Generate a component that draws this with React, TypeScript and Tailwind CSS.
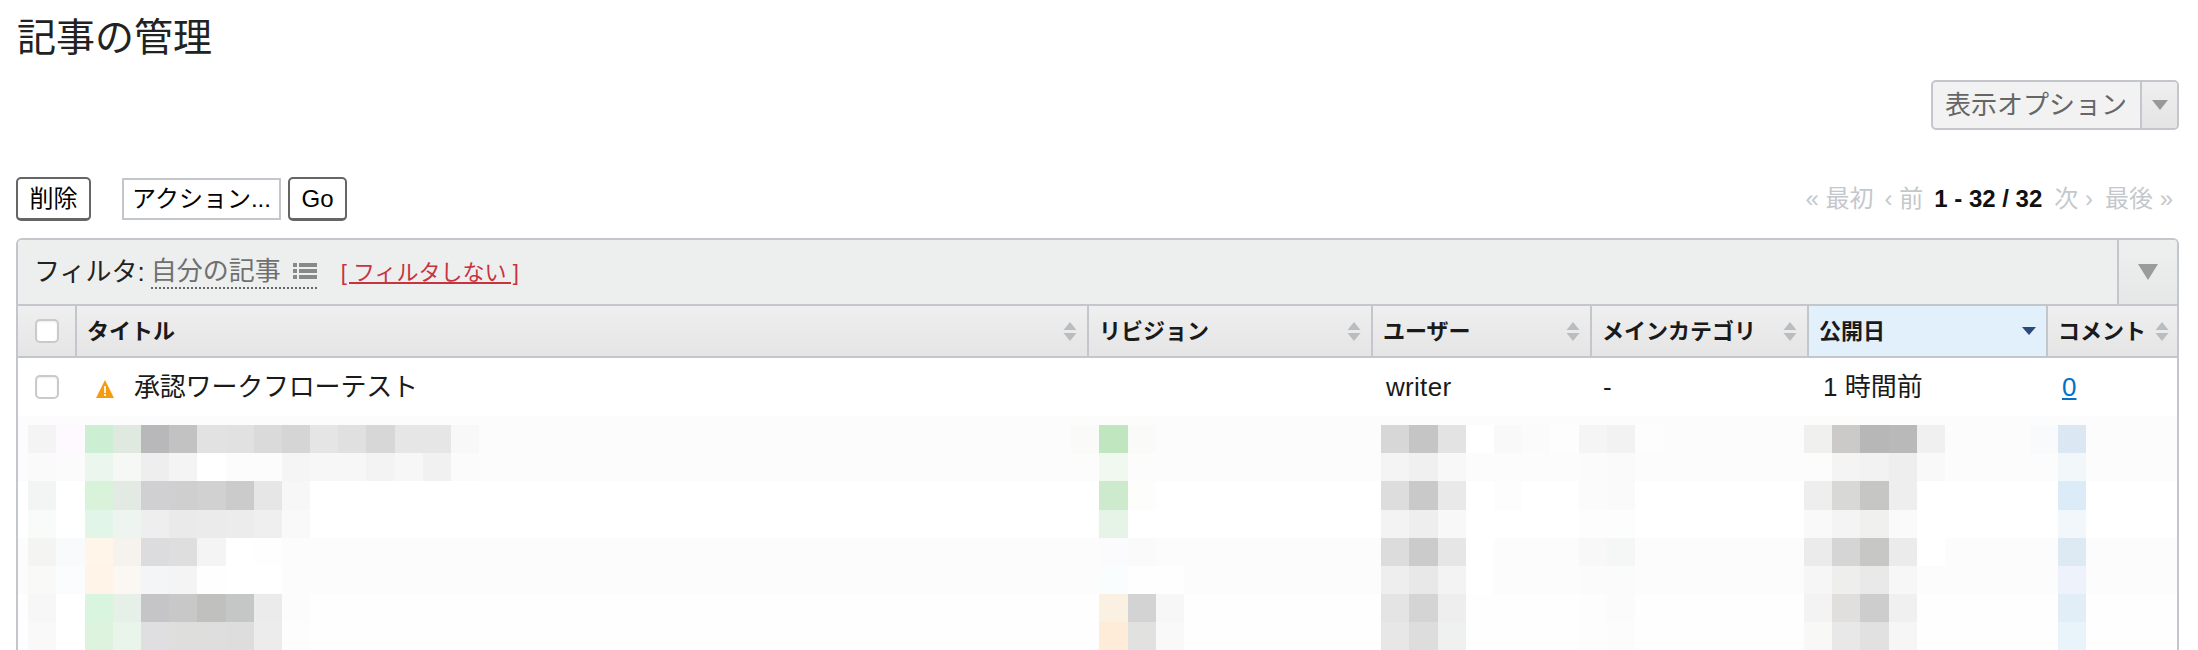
import React from "react";

const FONT = "font-['Liberation_Sans','Noto_Sans_CJK_JP',sans-serif]";
const COLS = "grid grid-cols-[57px_1012px_284px_219px_217px_239px_131px]";

type Cell = [number, string];
type Row = { bg: string; cells: Cell[] };

const seq = (start: number, colours: string[]): Cell[] =>
  colours.map((c, i) => [start + i, c] as Cell);

const mosaic: Row[] = [
  {
    bg: "#fcfcfc",
    cells: [
      ...seq(1, ["#f4f4f4", "#fef9fe", "#cceed2", "#dfe9e0", "#b8b8ba", "#c2c2c2", "#e2e2e2", "#e1e1e1", "#dadada", "#d5d5d5", "#e5e5e5", "#e0e0e0", "#d7d7d7", "#e6e6e6", "#e6e6e6", "#f8f8f8"]),
      ...seq(38, ["#fafaf8", "#bfe6bf", "#fafaf8"]),
      ...seq(49, ["#d7d7d7", "#c5c5c5", "#e3e3e3", "#ffffff"]),
      ...seq(53, ["#f9f9f9", "#fbfbfb", "#fdfdfd", "#f5f5f5", "#f2f2f2", "#fdfdfd"]),
      ...seq(64, ["#f0f0ee", "#cbcac8", "#b7b7b7", "#b9b9b9", "#f0f0f0"]),
      ...seq(72, ["#f8fafc", "#dbe8f3"]),
    ],
  },
  {
    bg: "#fcfcfc",
    cells: [
      ...seq(1, ["#fafafa", "#fbfbfb", "#ebf6ee", "#f5f8f5", "#eeeeee", "#f4f4f4", "#ffffff", "#fcfcfc", "#fcfcfc", "#f5f5f5", "#f7f7f7", "#f7f7f7", "#f3f3f3", "#f7f7f7", "#f1f1f1", "#fbfbfb"]),
      [39, "#f0f8f0"],
      ...seq(49, ["#f4f4f4", "#f0f0f0", "#f8f8f8"]),
      ...seq(56, ["#fbfbfb", "#fafafa"]),
      ...seq(65, ["#f4f4f4", "#f2f2f2", "#eeeeee", "#f9f9f9"]),
      [73, "#f2f7fa"],
    ],
  },
  {
    bg: "#ffffff",
    cells: [
      ...seq(1, ["#f3f5f4", "#ffffff", "#d8f3d9", "#e3eae3", "#d0d0d2", "#cfcfcf", "#d1d1d1", "#cbcbcb", "#e6e6e6", "#f7f7f7"]),
      ...seq(39, ["#cdeacd", "#fdfdfb"]),
      ...seq(49, ["#dddddd", "#c9c9c9", "#e9e9e9"]),
      [53, "#fdfdfd"],
      ...seq(56, ["#fbfbfb", "#fafafa"]),
      ...seq(64, ["#eeeeee", "#d8d8d6", "#c6c6c4", "#eeeeee"]),
      [73, "#dcebf8"],
    ],
  },
  {
    bg: "#ffffff",
    cells: [
      ...seq(1, ["#f9fbfa", "#ffffff", "#e1f5e8", "#eef5f0", "#eeeeee", "#eaeaea", "#ebebeb", "#ececec", "#efefef", "#f9f9f9"]),
      [39, "#e6f4e8"],
      ...seq(49, ["#f3f3f3", "#eeeeee", "#f8f8f8"]),
      ...seq(56, ["#fdfdfd", "#fdfdfd"]),
      ...seq(64, ["#f9f9f9", "#f4f4f4", "#f0f0ee", "#fafafa"]),
      [73, "#f2f7fc"],
    ],
  },
  {
    bg: "#fcfcfc",
    cells: [
      ...seq(1, ["#f4f4f2", "#f9fafc", "#fff5e8", "#f6f3ee", "#dcdcde", "#dedede", "#f4f4f4", "#ffffff", "#fefefe"]),
      ...seq(39, ["#fbfbfe", "#fafafa"]),
      ...seq(49, ["#dcdcdc", "#cbcbcb", "#e6e6e6", "#ffffff"]),
      ...seq(56, ["#f8f8f8", "#f5f7f6"]),
      ...seq(64, ["#ebebeb", "#d5d5d5", "#c7c7c5", "#ebebeb", "#ffffff"]),
      [73, "#dde9f3"],
    ],
  },
  {
    bg: "#fcfcfc",
    cells: [
      ...seq(1, ["#f9f9f7", "#fbfcfe", "#fff4e7", "#fbf8f3", "#f4f5f7", "#f4f4f4", "#fefefe", "#ffffff", "#ffffff"]),
      ...seq(39, ["#fafdfe", "#fefefe", "#fefefe"]),
      ...seq(49, ["#eeeeee", "#e8e8e8", "#f3f3f3", "#ffffff"]),
      ...seq(56, ["#fbfbfb", "#fbfbfb"]),
      ...seq(64, ["#f6f6f6", "#eeeeec", "#e9e9e9", "#f7f7f7"]),
      [73, "#edf2fb"],
    ],
  },
  {
    bg: "#fefefe",
    cells: [
      ...seq(1, ["#f7f7f7", "#ffffff", "#d9f5e0", "#e6f0e8", "#c5c5c7", "#c8c8c8", "#c0c0be", "#c5c7c6", "#ebebeb", "#fcfcfc"]),
      ...seq(39, ["#fbf1e2", "#d3d3d3", "#f7f7f7"]),
      ...seq(49, ["#e4e4e4", "#d4d4d4", "#eeeeee"]),
      ...seq(56, ["#fdfdfd", "#fbfbfb"]),
      ...seq(64, ["#f3f3f3", "#e0dfdd", "#cdcdcd", "#f0f0f0"]),
      [73, "#e1eef8"],
    ],
  },
  {
    bg: "#fefefe",
    cells: [
      ...seq(1, ["#f9f9f9", "#ffffff", "#def3dd", "#e9f4eb", "#dfdfe1", "#dededc", "#dedede", "#dddddd", "#ececec", "#fdfdfd"]),
      ...seq(39, ["#feecd8", "#e1e1df", "#f9f9f9"]),
      ...seq(49, ["#e7e7e7", "#dddddd", "#eff1f0"]),
      ...seq(56, ["#fdfdfd", "#fcfcfc"]),
      ...seq(64, ["#f8f8f6", "#e8e8e8", "#e1e1e1", "#f6f6f6"]),
      [73, "#e8f3fa"],
    ],
  },
];

function SortArrows() {
  return (
    <svg width="14" height="19" viewBox="0 0 14 19" className="shrink-0">
      <path d="M7 0 L13.5 8 H0.5 Z" fill="#b9bdc0" />
      <path d="M0.5 11 H13.5 L7 19 Z" fill="#b9bdc0" />
    </svg>
  );
}

function Triangle({ w, h, fill }: { w: number; h: number; fill: string }) {
  return (
    <svg width={w} height={h} viewBox={`0 0 ${w} ${h}`} className="shrink-0">
      <path d={`M0 0 H${w} L${w / 2} ${h} Z`} fill={fill} />
    </svg>
  );
}

function Checkbox() {
  return (
    <span className="block h-6 w-6 rounded-[5px] border-2 border-[#cacaca] bg-white shadow-[inset_0_1px_2px_rgba(0,0,0,0.08)]" />
  );
}

function HeaderCell({ label, last }: { label: string; last?: boolean }) {
  return (
    <div
      className={`flex items-center justify-between border-l-2 border-[#c3c7cb] bg-gradient-to-b from-[#efefef] to-[#e5e5e5] pl-[10px] ${
        last ? "pr-[8px]" : "pr-[10px]"
      }`}
    >
      <span className="text-[22px] font-bold text-[#1a1a1a]">{label}</span>
      <SortArrows />
    </div>
  );
}

export default function App() {
  return (
    <div className={`h-[650px] w-[2198px] overflow-hidden bg-white pl-4 pr-[19px] text-[#1a1a1a] ${FONT}`}>
      <h1 className="h-[72px] pl-[1px] text-[39px] leading-[76px] font-normal text-[#222]">記事の管理</h1>

      <div className="mt-2 flex justify-end">
        <div className="flex h-[50px] w-[248px] rounded-[5px] border-2 border-[#c3c7cb] bg-[#f2f2f2] text-[26px] text-[#666]">
          <div className="flex flex-1 items-center pl-[12px]">表示オプション</div>
          <div className="flex w-[37px] items-center justify-center rounded-r-[3px] border-l-2 border-[#c3c7cb] bg-gradient-to-b from-[#efefef] to-[#e4e4e4]">
            <Triangle w={16} h={10} fill="#999999" />
          </div>
        </div>
      </div>

      <div className="mt-[47px] flex h-11 items-center justify-between">
        <div className="flex items-center text-[24px] text-black">
          <button className="flex h-11 w-[75px] items-center justify-center rounded-[5px] border-2 border-b-[3px] border-[#666] bg-white">
            削除
          </button>
          <button className="ml-[31px] flex h-[42px] w-[159px] items-center justify-center border-2 border-[#c3c7cb] bg-white">
            アクション...
          </button>
          <button className="ml-[7px] flex h-11 w-[59px] items-center justify-center rounded-[5px] border-2 border-b-[3px] border-[#666] bg-white">
            Go
          </button>
        </div>
        <div className="flex items-center pr-[6px] text-[24px] text-[#c4c8cc]">
          <span>« 最初</span>
          <span className="ml-[11px]">‹ 前</span>
          <span className="ml-[11px] font-bold text-[#111]">1 - 32 / 32</span>
          <span className="ml-3">次 ›</span>
          <span className="ml-3">最後 »</span>
        </div>
      </div>

      <div className="mt-[17px] h-[500px] overflow-hidden rounded-t-[6px] border-x-2 border-t-2 border-[#c3c7cb]">
        <div className="flex h-[66px] border-b-2 border-[#c3c7cb] bg-[#edefef]">
          <div className="flex flex-1 items-center pl-[16px] text-[26px]">
            <span className="text-[#222]">フィルタ:</span>
            <span className="ml-[6px] flex items-center border-b-2 border-dotted border-[#666] leading-[32px] text-[#707070]">
              自分の記事
              <svg width="24" height="18" viewBox="0 0 24 18" className="ml-[12px]" fill="#888888">
                <rect x="0" y="1" width="4" height="4" />
                <rect x="6" y="1" width="18" height="4" />
                <rect x="0" y="7" width="4" height="4" />
                <rect x="6" y="7" width="18" height="4" />
                <rect x="0" y="13" width="4" height="4" />
                <rect x="6" y="13" width="18" height="4" />
              </svg>
            </span>
            <a className="ml-[24px] text-[22px] text-[#c7333f] underline">[ フィルタしない ]</a>
          </div>
          <div className="flex w-[60px] items-center justify-center border-l-2 border-[#c3c7cb] bg-gradient-to-b from-[#eeefef] to-[#e6e7e7]">
            <Triangle w={20} h={16} fill="#9b9b9b" />
          </div>
        </div>

        <div className={`${COLS} h-[52px] border-b-2 border-[#c3c7cb]`}>
          <div className="flex items-center bg-gradient-to-b from-[#efefef] to-[#e5e5e5] pl-[17px]">
            <Checkbox />
          </div>
          <HeaderCell label="タイトル" />
          <HeaderCell label="リビジョン" />
          <HeaderCell label="ユーザー" />
          <HeaderCell label="メインカテゴリ" />
          <div className="flex items-center justify-between border-l-2 border-[#c3c7cb] bg-[#e1f0fb] pl-[10px] pr-[10px]">
            <span className="text-[22px] font-bold text-[#1a1a1a]">公開日</span>
            <Triangle w={14} h={8} fill="#2a4a7c" />
          </div>
          <HeaderCell label="コメント" last />
        </div>

        <div className={`${COLS} h-[58px] text-[26px] text-[#1a1a1a]`}>
          <div className="flex items-center pl-[17px]">
            <Checkbox />
          </div>
          <div className="flex items-center pl-[21px]">
            <svg width="18" height="18" viewBox="0 0 18 18" className="mt-[3px] shrink-0">
              <path d="M9 0 L18 18 H0 Z" fill="#f79a0e" />
              <rect x="8" y="6" width="2" height="7" fill="#fff3dc" />
              <rect x="8" y="14" width="2" height="2" fill="#fff3dc" />
            </svg>
            <span className="ml-[20px] tracking-[-0.2px]">承認ワークフローテスト</span>
          </div>
          <div />
          <div className="flex items-center pl-[15px] tracking-[0.3px]">writer</div>
          <div className="flex items-center pl-[13px]">-</div>
          <div className="flex items-center pl-[16px]">1 時間前</div>
          <div className="flex items-center pl-[16px]">
            <a className="text-[#0073c6] underline">0</a>
          </div>
        </div>

        <div className="bg-[#fcfcfc] pt-[9px]">
          {mosaic.map((row, r) => (
            <div
              key={r}
              className="grid h-[28.2px] grid-cols-[repeat(76,28.2px)] pl-[10.2px]"
              style={{ backgroundColor: row.bg }}
            >
              {row.cells.map(([col, colour]) => (
                <div key={col} style={{ gridColumnStart: col, gridRowStart: 1, backgroundColor: colour }} />
              ))}
            </div>
          ))}
        </div>
      </div>
    </div>
  );
}
